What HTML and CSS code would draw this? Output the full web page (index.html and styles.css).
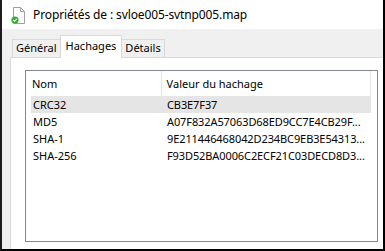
FILE: index.html
```
<!DOCTYPE html>
<html lang="fr">
<head>
    <meta charset="UTF-8">
    <meta name="viewport" content="width=device-width, initial-scale=1.0">
    <title>Propriétés de : svloe005-svtnp005.map</title>
    <link rel="stylesheet" href="styles.css">
</head>
<body>
<div class="window">
    <div class="titlebar">
        <svg class="file-icon" width="16" height="18" viewBox="0 0 16 18">
            <path d="M3.5 1.5 H10.5 L14.5 5.5 V17.5 H3.5 Z" fill="#fff" stroke="#a0a0a0"/>
            <path d="M10.5 1.5 V5.5 H14.5" fill="none" stroke="#a0a0a0"/>
            <circle cx="5" cy="14" r="3.6" fill="#3aa935"/>
            <path d="M3.3 14 L4.6 15.3 L6.9 12.8" fill="none" stroke="#fff" stroke-width="1.1"/>
        </svg>
        <span class="title">Propriétés de : svloe005-svtnp005.map</span>
    </div>
    <div class="tabs">
        <div class="tab">Général</div>
        <div class="tab active">Hachages</div>
        <div class="tab">Détails</div>
    </div>
    <div class="panel">
        <div class="list">
            <div class="list-head">
                <div class="col-name">Nom</div>
                <div class="col-value">Valeur du hachage</div>
            </div>
            <div class="row selected">
                <div class="col-name">CRC32</div>
                <div class="col-value">CB3E7F37</div>
            </div>
            <div class="row">
                <div class="col-name">MD5</div>
                <div class="col-value">A07F832A57063D68ED9CC7E4CB29F...</div>
            </div>
            <div class="row">
                <div class="col-name">SHA-1</div>
                <div class="col-value">9E211446468042D234BC9EB3E54313...</div>
            </div>
            <div class="row">
                <div class="col-name">SHA-256</div>
                <div class="col-value">F93D52BA0006C2ECF21C03DECD8D3...</div>
            </div>
        </div>
    </div>
</div>
</body>
</html>
```
FILE: styles.css
```
body {
    margin: 0;
    font-family: "Noto Sans", "Open Sans", sans-serif;
    font-size: 11px;
    color: #000;
}

.window {
    width: 385px;
    height: 251px;
    box-sizing: border-box;
    border-left: 2px solid #1e1e1e;
    border-right: 2px solid #000;
    border-bottom: 2px solid #000;
    background: #f0f0f0;
    display: flex;
    flex-direction: column;
}

.titlebar {
    height: 29px;
    background: #fff;
    display: flex;
    align-items: center;
    padding-left: 8px;
    gap: 7px;
}

.title {
    font-size: 12px;
    letter-spacing: -0.12px;
}

.tabs {
    height: 28px;
    display: flex;
    align-items: flex-end;
    padding-left: 10px;
}

.tab {
    height: 17px;
    line-height: 16px;
    padding: 0 3px;
    border: 1px solid #d9d9d9;
    border-bottom: none;
    margin-right: -1px;
}

.tab.active {
    position: relative;
    height: 22px;
    line-height: 19px;
    margin-bottom: -1px;
    padding: 0 5px;
    background: #fff;
}

.panel {
    flex: 1;
    display: flex;
    margin-left: 8px;
    border-left: 1px solid #d9d9d9;
    border-top: 1px solid #d9d9d9;
    background: #fff;
    padding: 12px 5px 7px 14px;
}

.list {
    flex: 1;
    border: 1px solid #828790;
    padding-left: 5px;
}

.list-head,
.row {
    display: flex;
    width: 340px;
}

.list-head {
    height: 25px;
    align-items: center;
}

.row {
    height: 17px;
    align-items: center;
}

.row.selected {
    background: #e5e5e5;
}

.col-name {
    width: 131px;
    box-sizing: border-box;
    padding-left: 1px;
}

.col-value {
    width: 209px;
    box-sizing: border-box;
    padding-left: 5px;
    white-space: nowrap;
}

.row .col-value {
    letter-spacing: -0.1px;
}

.list-head .col-name,
.list-head .col-value {
    height: 100%;
    display: flex;
    align-items: center;
    border-right: 1px solid #e5e5e5;
}

.list-head .col-value {
    width: 210px;
}

.row .col-name {
    padding-left: 2px;
}
```
